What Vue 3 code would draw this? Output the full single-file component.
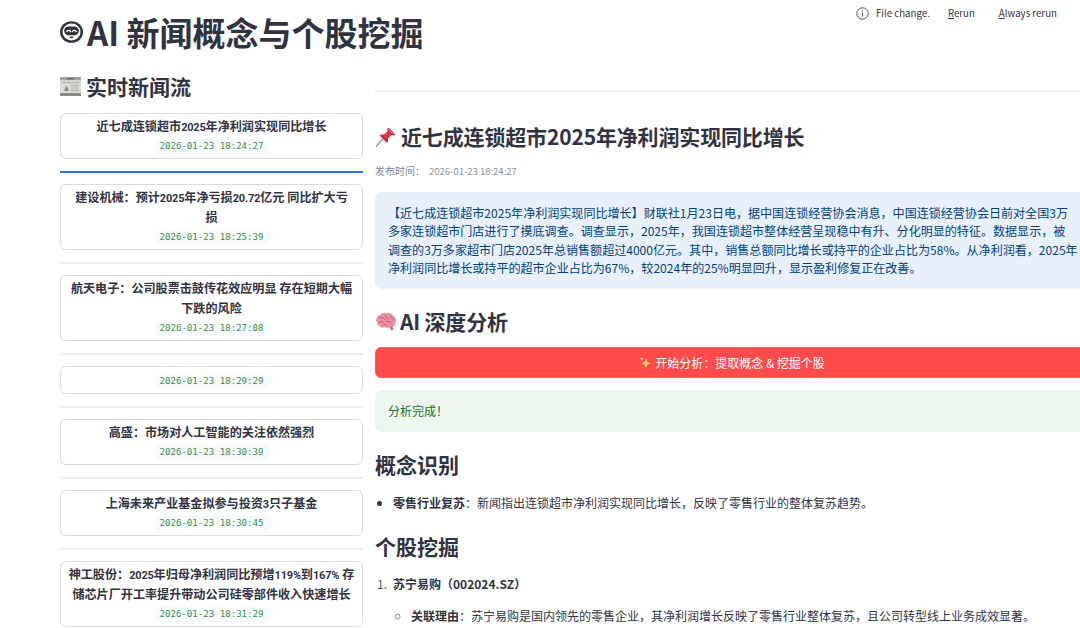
<script setup>
import { ref } from 'vue';

// 左边新闻流
const newsList = ref([
  { title: ['近七成连锁超市2025年净利润实现同比增长'], time: '2026-01-23 18:24:27', active: true },
  { title: ['建设机械：预计2025年净亏损20.72亿元 同比扩大亏', '损'], time: '2026-01-23 18:25:39' },
  { title: ['航天电子：公司股票击鼓传花效应明显 存在短期大幅', '下跌的风险'], time: '2026-01-23 18:27:08' },
  { title: [], time: '2026-01-23 18:29:29' },
  { title: ['高盛：市场对人工智能的关注依然强烈'], time: '2026-01-23 18:30:39' },
  { title: ['上海未来产业基金拟参与投资3只子基金'], time: '2026-01-23 18:30:45' },
  { title: ['神工股份：2025年归母净利润同比预增119%到167% 存', '储芯片厂开工率提升带动公司硅零部件收入快速增长'], time: '2026-01-23 18:31:29' },
]);

const summaryLines = [
  '【近七成连锁超市2025年净利润实现同比增长】财联社1月23日电，据中国连锁经营协会消息，中国连锁经营协会日前对全国3万',
  '多家连锁超市门店进行了摸底调查。调查显示，2025年，我国连锁超市整体经营呈现稳中有升、分化明显的特征。数据显示，被',
  '调查的3万多家超市门店2025年总销售额超过4000亿元。其中，销售总额同比增长或持平的企业占比为58%。从净利润看，2025年',
  '净利润同比增长或持平的超市企业占比为67%，较2024年的25%明显回升，显示盈利修复正在改善。',
];

// 标题里的数字单独包一层，字号略小
function splitNums(line) {
  return line.split(/(\d[\d.%]*)/);
}
</script>

<template>
  <div class="page">
    <div class="toolbar">
      <svg class="info" width="13" height="13" viewBox="0 0 13 13">
        <circle cx="6.5" cy="6.5" r="5.7" fill="none" stroke="#555" stroke-width="1" />
        <rect x="6" y="5.6" width="1" height="4" fill="#555" />
        <rect x="6" y="3.4" width="1" height="1.1" fill="#555" />
      </svg>
      <span class="msg">File change.</span>
      <span class="act"><u>R</u>erun</span>
      <span class="act"><u>A</u>lways rerun</span>
      <span class="act last"><u>D</u>eploy</span>
    </div>

    <h1 class="title">
      <svg class="face" width="23" height="22" viewBox="0 0 23 22">
        <ellipse cx="11.5" cy="11" rx="11.5" ry="10.8" fill="#31333f" />
        <ellipse cx="11.5" cy="11" rx="9" ry="8.5" fill="#fff" />
        <rect x="4.2" y="5.6" width="14.6" height="8.6" rx="4.2" fill="#31333f" />
        <path d="M6.6 11a2.2 2.2 0 0 1 4.2 0M12.2 11a2.2 2.2 0 0 1 4.2 0" fill="none" stroke="#fff" stroke-width="1.3" />
        <rect x="9.7" y="15.6" width="3.6" height="1.4" fill="#31333f" />
      </svg>
      <span>AI 新闻概念与个股挖掘</span>
    </h1>

    <div class="columns">
      <div class="left">
        <h2 class="sub">
          <svg width="21" height="19" viewBox="0 0 21 19">
            <rect width="21" height="19" fill="#dcdcd8" />
            <rect width="21" height="3.2" fill="#a3a39e" />
            <rect x="7" y="1" width="7" height="1.4" fill="#6f6f6a" />
            <rect x="1.5" y="5" width="18" height="1.2" fill="#b5b5b0" />
            <path d="M4 14 6.5 8.5 9 14Z" fill="#8b8b86" />
            <rect x="11" y="8" width="8" height="1" fill="#a9a9a4" />
            <rect x="11" y="10.5" width="8" height="1" fill="#a9a9a4" />
            <rect x="11" y="13" width="8" height="1" fill="#a9a9a4" />
            <rect y="16" width="21" height="3" fill="#8a8a85" />
          </svg>
          <span>实时新闻流</span>
        </h2>
        <template v-for="(item, i) in newsList" :key="item.time">
          <div class="card">
            <div class="card-title">
              <div v-for="line in item.title" :key="line" class="title-line">
                <span v-for="(part, n) in splitNums(line)" :key="n" :class="{ num: n % 2 === 1 }">{{ part }}</span>
              </div>
            </div>
            <span class="stamp">{{ item.time }}</span>
          </div>
          <div v-if="i < newsList.length - 1" class="rule" :class="{ blue: item.active }"></div>
        </template>
      </div>

      <div class="right">
        <div class="top-rule"></div>
        <h2 class="headline">
          <svg width="21" height="20" viewBox="0 0 21 20">
            <path d="M1 19.5 8.5 11" stroke="#8a94a3" stroke-width="1.2" />
            <path d="M13.5 0.5 20.5 7.5 18.6 8.6 16.4 8 12.8 11.8C13.4 13.4 12.9 15 12 16L4.6 8.6C5.6 7.7 7.2 7.2 8.8 7.8L12.6 4.2 12.2 2.2Z" fill="#dd2e44" />
            <path d="M13.5 2.5 18 7" stroke="#f0737f" stroke-width="1" />
            <path d="M6.5 8.6 12 14.2" stroke="#a8162c" stroke-width="1" />
          </svg>
          <span>近七成连锁超市2025年净利润实现同比增长</span>
        </h2>
        <p class="pub">发布时间：<span>2026-01-23 18:24:27</span></p>
        <div class="summary">
          <div v-for="line in summaryLines" :key="line">{{ line }}</div>
        </div>

        <h2 class="section">
          <svg width="22" height="19" viewBox="0 0 23 20">
            <path d="M2 11C0 8 2 4 5 3.5 6.5 1 10 .5 12 1.5 15 .5 18 1.5 19 4 22 5.5 23 9 21.5 11.5 21.5 14.5 18.5 16.5 16 15.5 14.5 17 12 17 10.5 16 8.5 17 6 16.5 5 15 3.5 15 2 13 2 11Z" fill="#ea8fa6" />
            <path d="M15 15.5 17 19.5 19.5 18.5 18 15Z" fill="#c96f88" />
            <path d="M5 6c2-1 4 0 5 2M11 3c0 2 1 4 3 4M16 4c0 2 2 3 4 3M4 11c2-1 4-1 5 1M12 10c2 0 4 0 5 2M9 14c1-1 2-1 3-1" fill="none" stroke="#b9546f" stroke-width="1" />
          </svg>
          <span>AI 深度分析</span>
        </h2>
        <button class="start">
          <svg width="12" height="13" viewBox="0 0 13 13">
            <path d="M7.5 1.5 9 6 12.5 7.5 9 9 7.5 13 6 9 2.5 7.5 6 6Z" fill="#ffcf5c" />
            <path d="M3 0 3.6 2 5.5 2.6 3.6 3.2 3 5 2.4 3.2.5 2.6 2.4 2Z" fill="#ffe08a" />
          </svg>
          <span>开始分析：提取概念 &amp; 挖掘个股</span>
        </button>
        <div class="done">分析完成！</div>

        <h2 class="md-title concept">概念识别</h2>
        <ul class="bullets">
          <li><b>零售行业复苏</b>：新闻指出连锁超市净利润实现同比增长，反映了零售行业的整体复苏趋势。</li>
        </ul>

        <h2 class="md-title">个股挖掘</h2>
        <ol class="stocks">
          <li>
            <b>苏宁易购（002024.SZ）</b>
            <ul>
              <li><b>关联理由</b>：苏宁易购是国内领先的零售企业，其净利润增长反映了零售行业整体复苏，且公司转型线上业务成效显著。</li>
            </ul>
          </li>
        </ol>
      </div>
    </div>
  </div>
</template>

<style>
html, body {
  margin: 0;
  background: #fff;
}
</style>

<style scoped>
.page {
  position: relative;
  width: 1080px;
  height: 628px;
  overflow: hidden;
  padding-left: 60px;
  box-sizing: border-box;
  background: #fff;
  color: #31333f;
  font-family: "Noto Sans CJK SC", "Noto Sans", sans-serif;
}

.toolbar {
  position: absolute;
  top: 6px;
  left: 856px;
  display: flex;
  align-items: center;
  font-size: 9.7px;
  line-height: 14px;
  white-space: nowrap;
}

.info { margin-right: 7px; }
.msg { margin-right: 18px; }
.act { margin-right: 24px; }

.title {
  display: flex;
  align-items: center;
  gap: 4px;
  margin: 0;
  height: 67px;
  padding-bottom: 4px;
  box-sizing: border-box;
  font-size: 33px;
  font-weight: 700;
  white-space: nowrap;
}

.columns {
  display: flex;
  gap: 12px;
  align-items: flex-start;
}

.left {
  width: 303px;
  flex: none;
}

.sub {
  display: flex;
  align-items: center;
  gap: 5px;
  height: 46px;
  padding-bottom: 8px;
  box-sizing: border-box;
  margin: 0;
  font-size: 21px;
  font-weight: 700;
}

.card {
  border: 1px solid #d9dbe0;
  border-radius: 6px;
  padding: 3px 4px 4px;
  text-align: center;
  box-sizing: border-box;
}

.card-title {
  min-height: 2px;
  font-family: Roboto, "Noto Sans CJK SC", sans-serif;
  font-size: 12.1px;
  font-weight: 700;
  line-height: 20px;
  margin-bottom: 2px;
  white-space: nowrap;
}

.title-line { height: 20px; }

.num {
  font-size: 11px;
  letter-spacing: -0.2px;
}

.stamp {
  display: block;
  width: fit-content;
  margin: 0 auto;
  height: 15px;
  line-height: 15px;
  padding: 0 4px;
  background: #f8f9fb;
  border-radius: 3px;
  color: #33934f;
  font-family: "DejaVu Sans Mono", monospace;
  font-size: 9.1px;
}

.rule {
  height: 2px;
  background: #eceef1;
  margin: 12px 0 11px;
}

.rule.blue { background: #2f6fed; }

.right {
  width: 714px;
  flex: none;
}

.top-rule {
  height: 2px;
  margin-top: 23px;
  background: #eceef1;
}

.headline {
  display: flex;
  align-items: center;
  gap: 5px;
  margin: 28px 0 0;
  font-size: 21px;
  font-weight: 700;
  line-height: 33px;
  letter-spacing: -0.15px;
  white-space: nowrap;
}

.pub {
  margin: 10px 0 0;
  font-size: 10px;
  line-height: 16px;
  color: #808495;
}

.pub span {
  margin-left: 4px;
  font-size: 9.5px;
  color: #8f92a0;
}

.summary {
  margin-top: 13px;
  padding: 12px 0 12px 13px;
  height: 97px;
  box-sizing: border-box;
  background: #e8f0fb;
  border-radius: 7px;
  color: #004280;
  font-size: 12.05px;
  line-height: 18.4px;
  white-space: nowrap;
}

.section {
  display: flex;
  align-items: center;
  gap: 3px;
  margin: 16px 0 0;
  font-size: 21px;
  font-weight: 700;
  line-height: 32px;
  letter-spacing: -0.2px;
}

.start {
  display: flex;
  align-items: center;
  justify-content: center;
  gap: 4px;
  width: 100%;
  height: 31px;
  margin-top: 10px;
  padding: 0;
  border: 1px solid #ff5c5c;
  border-radius: 6px;
  background: #ff4b4b;
  color: #fff;
  font-family: inherit;
  font-size: 12px;
}

.done {
  margin-top: 12px;
  padding: 11px 13px;
  height: 42px;
  box-sizing: border-box;
  background: #ecf6ee;
  border-radius: 7px;
  color: #177233;
  font-size: 12px;
  line-height: 20px;
}

.md-title {
  margin: 16px 0 0;
  font-size: 21px;
  font-weight: 700;
  line-height: 34px;
}

.md-title.concept { margin-top: 15px; }

.bullets, .stocks {
  padding-left: 18px;
  font-size: 12px;
  line-height: 20px;
}

.bullets { margin: 12px 0 0; }
.stocks { margin: 11px 0 0; }

.stocks > li::marker {
  content: counter(list-item) ".\2002";
  color: #555;
}

.stocks ul {
  margin: 12px 0 0;
  padding-left: 18px;
  list-style: circle;
}

.stocks ul li::marker { color: #8a8a8a; }

b { font-weight: 700; }
</style>
